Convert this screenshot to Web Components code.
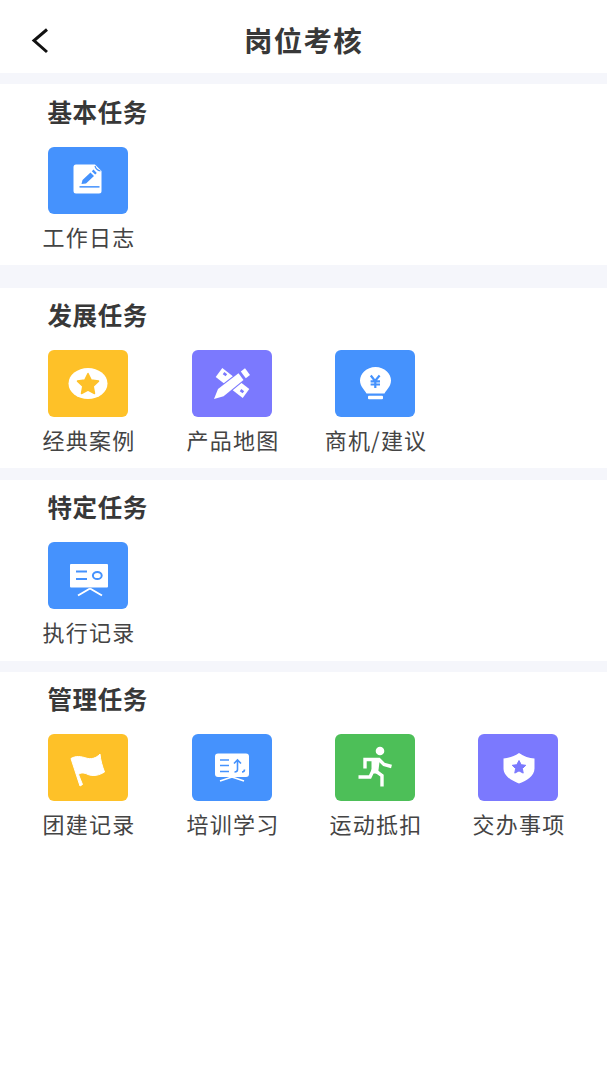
<!DOCTYPE html>
<html lang="zh">
<head>
<meta charset="utf-8">
<title>岗位考核</title>
<style>
  html, body { margin: 0; background: #fff; }
  body { font-family: "Noto Sans CJK SC", "Noto Sans", sans-serif; }
</style>
</head>
<body>
<page-header title="岗位考核"></page-header>

<task-section title="基本任务" gap="11" top="12" bottom="13.5">
  <task-item label="工作日志" color="#4592fd" icon="note"></task-item>
</task-section>

<task-section title="发展任务" gap="23" top="11" bottom="13.5">
  <task-item label="经典案例" color="#fec128" icon="star"></task-item>
  <task-item label="产品地图" color="#7b79fe" icon="ruler"></task-item>
  <task-item label="商机/建议" color="#4592fd" icon="bulb"></task-item>
</task-section>

<task-section title="特定任务" gap="12" top="11" bottom="14.5">
  <task-item label="执行记录" color="#4592fd" icon="board"></task-item>
</task-section>

<task-section title="管理任务" gap="11" top="11" bottom="14.5">
  <task-item label="团建记录" color="#fec128" icon="flag"></task-item>
  <task-item label="培训学习" color="#4592fd" icon="train"></task-item>
  <task-item label="运动抵扣" color="#4dbf58" icon="run"></task-item>
  <task-item label="交办事项" color="#7b79fe" icon="shield"></task-item>
</task-section>

<script>
const ICONS = {
  note: (c) => `
    <path d="M-12 -16 H7 L13.5 -9.5 V10.5 Q13.5 13 11 13 H-12 Q-14.5 13 -14.5 10.5 V-13.5 Q-14.5 -16 -12 -16 Z" fill="#fff"/>
    <path d="M7 -14.5 Q8 -10.5 12.5 -9.5" fill="none" stroke="${c}" stroke-width="1.2"/>
    <path d="M-6.5 3.5 L-5.5 -0.5 L2.5 -8 L6 -4.5 L-2 3 Z M3.8 -9.3 L5.5 -11 L8.8 -7.6 L7.2 -5.9 Z" fill="${c}"/>
    <rect x="-8.5" y="5.6" width="20" height="1.5" fill="${c}"/>`,
  star: (c) => `
    <ellipse cx="0" cy="0" rx="19.5" ry="15.5" fill="#fff"/>
    <path d="M0 -10 L3.2 -3.4 L10.5 -2.4 L5.2 2.8 L6.5 10 L0 6.6 L-6.5 10 L-5.2 2.8 L-10.5 -2.4 L-3.2 -3.4 Z" fill="${c}" stroke="${c}" stroke-width="1.5" stroke-linejoin="round"/>`,
  ruler: (c) => `
    <path d="M-9.7 -15.4 L-16.3 -6.6 L10.7 14.4 L17.3 5.6 Z" fill="#fff"/>
    <rect x="-9" y="-10.5" width="3.6" height="2.6" transform="rotate(38 -7 -9)" fill="${c}"/>
    <rect x="8" y="6.5" width="3.6" height="2.6" transform="rotate(38 10 8)" fill="${c}"/>
    <path d="M-18 15.5 L-14 5.6 L6.5 -10.3 L11.5 -3.5 L-8.4 12.8 Z" fill="#fff" stroke="${c}" stroke-width="2.2" stroke-linejoin="round" paint-order="stroke"/>
    <path d="M8.8 -12 L13 -15.2 L18 -8.4 L13.8 -5.2 Z" fill="#fff"/>`,
  bulb: (c) => `
    <path d="M0.5 -16.5 C9.5 -16.5 16 -10 16 -3 C16 3 11.5 6 9.5 10 H-8.5 C-10.5 6 -15 3 -15 -3 C-15 -10 -8.5 -16.5 0.5 -16.5 Z" fill="#fff"/>
    <rect x="-7" y="12.2" width="15" height="3.6" rx="1" fill="#fff"/>
    <path d="M-4.2 -8 L0 -2.5 L4.6 -8 M-4.4 -2.2 H5 M-4.4 1 H5 M0.3 -2.5 V4.6" fill="none" stroke="${c}" stroke-width="2.2"/>`,
  board: (c) => `
    <rect x="-18" y="-11.5" width="38" height="23.5" rx="1" fill="#fff"/>
    <path d="M-12 -4 H-1 M-12 3.5 H-1" stroke="${c}" stroke-width="2" fill="none"/>
    <ellipse cx="9.3" cy="0" rx="4.4" ry="3.6" fill="none" stroke="${c}" stroke-width="2"/>
    <path d="M2 13 L-10 20 M2 13 L14 20" stroke="#fff" stroke-width="2" fill="none"/>`,
  flag: () => `
    <path d="M-17 -9 C-12 -12 -7 -11 -2 -9.5 C3 -8 8 -9 12 -13.5 C12.5 -7 14.5 -1 16.5 4.5 C11 8 5 9 0 7 C-4 5 -7 5 -9.5 7 L-5.5 17 L-8 18.5 Z" fill="#fff" stroke="#fff" stroke-linejoin="round"/>`,
  train: (c) => `
    <rect x="-17" y="-14" width="34" height="23.5" rx="3" fill="#fff"/>
    <path d="M-12 -7.5 H-3 M-12 -2 H-3 M-12 4 H-3" stroke="${c}" stroke-width="1.6" fill="none"/>
    <path d="M5.5 -7.5 V2 Q5.5 4.5 2.5 4.5 M2 -4 L5.5 -7.5 L9 -4 M10 4.5 Q12.5 4.5 12.5 2" stroke="${c}" stroke-width="1.6" fill="none"/>
    <path d="M0 9.5 L-12 13.5 M0 9.5 L12 13.5" stroke="#fff" stroke-width="1.6" fill="none"/>`,
  run: () => `
    <circle cx="5" cy="-16.5" r="4.3" fill="#fff"/>
    <path d="M-10 1 V-8 H4 L9 -3 L16.5 -1 M-1 1 L-5 9.5 H-16.5 M0 3 L7 8 V19" fill="none" stroke="#fff" stroke-width="3.4"/>
    <path d="M-3.5 -9 H5 L3 6 H-3.5 Z" fill="#fff"/>`,
  shield: (c) => `
    <path d="M1 -14.5 C6 -11 11 -9.5 16.5 -9 V1 C16.5 8.5 8 13.5 1 16 C-6 13.5 -14.5 8.5 -14.5 1 V-9 C-9 -9.5 -4 -11 1 -14.5 Z" fill="#fff"/>
    <path d="M1 -7 L3.2 -2.8 L7.8 -2.2 L4.4 1 L5.2 5.6 L1 3.4 L-3.2 5.6 L-2.4 1 L-5.8 -2.2 L-1.2 -2.8 Z" fill="${c}" stroke="${c}" stroke-width="1" stroke-linejoin="round"/>`
};

class PageHeader extends HTMLElement {
  connectedCallback() {
    const title = this.getAttribute("title") || "";
    this.removeAttribute("title");
    this.attachShadow({ mode: "open" }).innerHTML = `
      <style>
        :host { display: grid; grid-template-columns: 1fr auto 1fr; align-items: center; height: 73px; padding-top: 8px; box-sizing: border-box; }
        svg { margin-left: 28px; display: block; }
        h1 { margin: 0; font-size: 28.5px; font-weight: 700; line-height: 1; color: #383838; letter-spacing: 1.2px; }
      </style>
      <svg width="24" height="28" viewBox="0 0 24 28"><path d="M19 2.5 L6 13.5 L19 25" fill="none" stroke="#111" stroke-width="3"/></svg>
      <h1>${title}</h1>
      <span></span>`;
  }
}

class TaskSection extends HTMLElement {
  connectedCallback() {
    const title = this.getAttribute("title") || "";
    const gap = this.getAttribute("gap") || "11";
    const top = this.getAttribute("top") || "12";
    const bottom = this.getAttribute("bottom") || "12";
    this.removeAttribute("title");
    this.attachShadow({ mode: "open" }).innerHTML = `
      <style>
        :host { display: block; background: #fff; border-top: ${gap}px solid #f5f6fb; padding: ${top}px 0 ${bottom}px 48px; }
        h2 { margin: 0 0 19px -0.5px; font-size: 24.5px; font-weight: 700; line-height: 32px; color: #383838; letter-spacing: 0.6px; }
        .items { display: grid; grid-template-columns: 144px 143px 143px 80px; }
      </style>
      <h2>${title}</h2>
      <div class="items"><slot></slot></div>`;
  }
}

class TaskItem extends HTMLElement {
  connectedCallback() {
    const label = this.getAttribute("label") || "";
    const color = this.getAttribute("color") || "#4592fd";
    const icon = ICONS[this.getAttribute("icon")];
    this.attachShadow({ mode: "open" }).innerHTML = `
      <style>
        :host { display: flex; flex-direction: column; align-items: center; width: 80px; gap: 5.5px; }
        svg { display: block; width: 80px; height: 67px; background: ${color}; border-radius: 6px; }
        span { font-size: 22px; line-height: 32px; color: #444; letter-spacing: 1.2px; white-space: nowrap; padding-left: 2px; }
      </style>
      <svg viewBox="-40 -33.5 80 67">${icon(color)}</svg>
      <span>${label}</span>`;
  }
}

customElements.define("page-header", PageHeader);
customElements.define("task-section", TaskSection);
customElements.define("task-item", TaskItem);
</script>
</body>
</html>
